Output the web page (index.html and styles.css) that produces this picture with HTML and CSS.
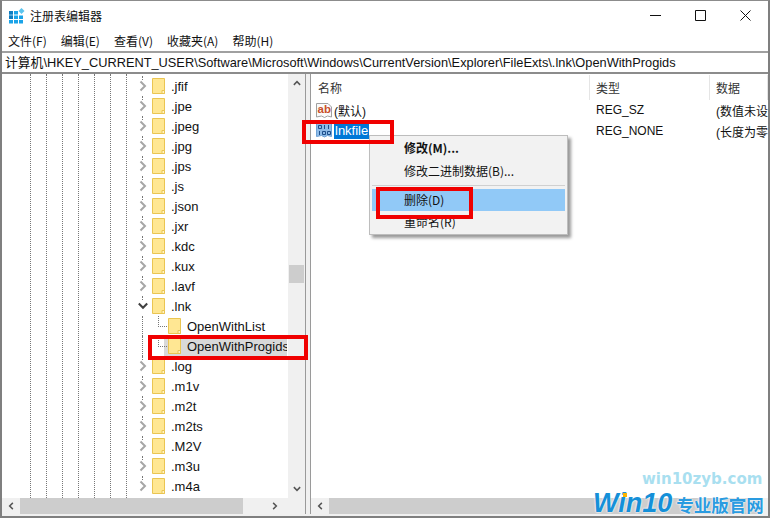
FILE: index.html
```html
<!DOCTYPE html>
<html>
<head>
  <title>注册表编辑器</title>
  <link rel="stylesheet" href="styles.css">
</head>
<body>
  <svg class="defs" width="0" height="0">
    <symbol id="folder" viewBox="0 0 13 16">
      <path d="M.5.5h12v15H.5z" fill="#ffe793" stroke="#eac552"/>
      <path d="M10 15.5v-3h2.500v3z" fill="#fff3c4" stroke="#eac552"/>
    </symbol>
    <symbol id="closed" viewBox="0 0 8 12">
      <path d="M1.500 1.500 6 6l-4.500 4.500" fill="none" stroke="#a6a6a6" stroke-width="2"/>
    </symbol>
    <symbol id="open" viewBox="0 0 10 8">
      <path d="M.8 1.500 5 5.800l4.200-4.300" fill="none" stroke="#404040" stroke-width="2"/>
    </symbol>
  </svg>

  <div class="window">
    <div class="titlebar">
      <svg class="app-icon" width="16" height="16" viewBox="0 0 16 16">
        <path d="M0 3h4v3.500H0zM5 3h4v3.500H5zM0 7.500h4V11H0zM5 7.500h4V11H5zM10 7.500h4V11h-4zM0 12h4v3.500H0zM5 12h4v3.500H5zM10 12h4v3.500h-4z" fill="#1aa3e8"/>
        <path d="M0 3h4v3.500H0zM0 7.500h4V11H0z" fill="#0f7cc0"/>
        <path d="M12.500 0 15.500 3l-3 3-3-3z" fill="#5cc4ee"/>
      </svg>
      <span class="title">注册表编辑器</span>
      <div class="controls">
        <svg width="11" height="11" viewBox="0 0 11 11"><path d="M0 5.500h11" stroke="#111"/></svg>
        <svg width="11" height="11" viewBox="0 0 11 11"><path d="M.5.5h10v10H.5z" fill="none" stroke="#111"/></svg>
        <svg width="11" height="11" viewBox="0 0 11 11"><path d="M.5.5l10 10M10.500.5l-10 10" stroke="#111"/></svg>
      </div>
    </div>

    <div class="menubar">
      <span>文件(F)</span>
      <span>编辑(E)</span>
      <span>查看(V)</span>
      <span>收藏夹(A)</span>
      <span>帮助(H)</span>
    </div>

    <div class="address">计算机\HKEY_CURRENT_USER\Software\Microsoft\Windows\CurrentVersion\Explorer\FileExts\.lnk\OpenWithProgids</div>

    <div class="panes">
      <div class="tree-pane">
        <div class="tree-top">
          <div class="tree">
            <div class="guides"><i></i><i></i><i></i><i></i><i></i><i></i><i></i></div>
            <div class="row"><svg class="arrow"><use href="#closed"/></svg><svg class="folder"><use href="#folder"/></svg><span>.jfif</span></div>
            <div class="row"><svg class="arrow"><use href="#closed"/></svg><svg class="folder"><use href="#folder"/></svg><span>.jpe</span></div>
            <div class="row"><svg class="arrow"><use href="#closed"/></svg><svg class="folder"><use href="#folder"/></svg><span>.jpeg</span></div>
            <div class="row"><svg class="arrow"><use href="#closed"/></svg><svg class="folder"><use href="#folder"/></svg><span>.jpg</span></div>
            <div class="row"><svg class="arrow"><use href="#closed"/></svg><svg class="folder"><use href="#folder"/></svg><span>.jps</span></div>
            <div class="row"><svg class="arrow"><use href="#closed"/></svg><svg class="folder"><use href="#folder"/></svg><span>.js</span></div>
            <div class="row"><svg class="arrow"><use href="#closed"/></svg><svg class="folder"><use href="#folder"/></svg><span>.json</span></div>
            <div class="row"><svg class="arrow"><use href="#closed"/></svg><svg class="folder"><use href="#folder"/></svg><span>.jxr</span></div>
            <div class="row"><svg class="arrow"><use href="#closed"/></svg><svg class="folder"><use href="#folder"/></svg><span>.kdc</span></div>
            <div class="row"><svg class="arrow"><use href="#closed"/></svg><svg class="folder"><use href="#folder"/></svg><span>.kux</span></div>
            <div class="row"><svg class="arrow"><use href="#closed"/></svg><svg class="folder"><use href="#folder"/></svg><span>.lavf</span></div>
            <div class="row"><svg class="arrow-open"><use href="#open"/></svg><svg class="folder"><use href="#folder"/></svg><span>.lnk</span></div>
            <div class="row child"><div class="label"><svg class="folder"><use href="#folder"/></svg><span>OpenWithList</span></div></div>
            <div class="row child current"><div class="label"><svg class="folder"><use href="#folder"/></svg><span>OpenWithProgids</span></div></div>
            <div class="row"><svg class="arrow"><use href="#closed"/></svg><svg class="folder"><use href="#folder"/></svg><span>.log</span></div>
            <div class="row"><svg class="arrow"><use href="#closed"/></svg><svg class="folder"><use href="#folder"/></svg><span>.m1v</span></div>
            <div class="row"><svg class="arrow"><use href="#closed"/></svg><svg class="folder"><use href="#folder"/></svg><span>.m2t</span></div>
            <div class="row"><svg class="arrow"><use href="#closed"/></svg><svg class="folder"><use href="#folder"/></svg><span>.m2ts</span></div>
            <div class="row"><svg class="arrow"><use href="#closed"/></svg><svg class="folder"><use href="#folder"/></svg><span>.M2V</span></div>
            <div class="row"><svg class="arrow"><use href="#closed"/></svg><svg class="folder"><use href="#folder"/></svg><span>.m3u</span></div>
            <div class="row"><svg class="arrow"><use href="#closed"/></svg><svg class="folder"><use href="#folder"/></svg><span>.m4a</span></div>
          </div>
          <div class="vscroll">
            <svg width="8" height="6" viewBox="0 0 10 8"><path d="M.8 6.500 5 2.200l4.200 4.300" fill="none" stroke="#555" stroke-width="2"/></svg>
            <div class="vthumb"></div>
            <svg width="8" height="6" viewBox="0 0 10 8"><path d="M.8 1.500 5 5.800l4.200-4.300" fill="none" stroke="#555" stroke-width="2"/></svg>
          </div>
        </div>
        <div class="hscroll">
          <svg width="6" height="8" viewBox="0 0 8 10"><path d="M6.500.8 2.200 5l4.300 4.200" fill="none" stroke="#555" stroke-width="2"/></svg>
          <div class="hthumb"></div>
          <svg width="6" height="8" viewBox="0 0 8 10"><path d="M1.500.8 5.800 5 1.500 9.200" fill="none" stroke="#555" stroke-width="2"/></svg>
        </div>
      </div>

      <div class="list-pane">
        <div class="list-body">
          <div class="list-head">
            <div class="col-name">名称</div>
            <div class="col-type">类型</div>
            <div class="col-data">数据</div>
          </div>
          <div class="list-row">
            <div class="col-name">
              <svg class="val-icon" width="16" height="17" viewBox="0 0 16 17">
                <path d="M.5 1.500h11.500l3.500 3.500v10l-4-1-3 1.500-3-1.500-5 1z" fill="#fafafa" stroke="#a0a0a0"/>
                <text x="1.500" y="11" class="ab">ab</text>
              </svg>
              <span>(默认)</span>
            </div>
            <div class="col-type">REG_SZ</div>
            <div class="col-data">(数值未设置)</div>
          </div>
          <div class="list-row">
            <div class="col-name">
              <svg class="val-icon" width="16" height="16" viewBox="0 0 16 16">
                <path d="M.5.500h15v13l-4-1-3 1.500-3-1.500-5 1z" fill="#8dbbe8" stroke="#6ea2d6"/>
                <path d="M2.500 2.500h3v3h-3zM8.500 2v4M12.500 2v4M3.500 8v4M6.500 8.500h3v3h-3zM11.500 8.500h3v3h-3z" fill="none" stroke="#1d4f8c"/>
              </svg>
              <span class="picked">lnkfile</span>
            </div>
            <div class="col-type">REG_NONE</div>
            <div class="col-data">(长度为零的二进制值)</div>
          </div>
        </div>
        <div class="hscroll list-scroll">
          <svg width="6" height="8" viewBox="0 0 8 10"><path d="M6.500.8 2.200 5l4.300 4.200" fill="none" stroke="#555" stroke-width="2"/></svg>
          <div class="hthumb"></div>
        </div>
      </div>
    </div>

    <div class="context-menu">
      <div class="item strong">修改(M)...</div>
      <div class="item">修改二进制数据(B)...</div>
      <div class="sep"></div>
      <div class="item hot">删除(D)</div>
      <div class="item">重命名(R)</div>
    </div>

    <div class="mark mark-value"></div>
    <div class="mark mark-delete"></div>
    <div class="mark mark-key"></div>

    <div class="site">win10zyb.com</div>
    <div class="brand"><b>Win10</b><span>专业版官网</span><i></i></div>
  </div>
</body>
</html>
```

FILE: styles.css
```css
* {
  box-sizing: border-box;
}

body {
  margin: 0;
  background-color: #fff;
  font-family: "Noto Sans CJK SC", "Liberation Sans", sans-serif;
  font-size: 12px;
  color: #111;
}

.defs {
  position: absolute;
}

.window {
  position: relative;
  width: 770px;
  height: 518px;
  overflow: hidden;
  display: flex;
  flex-direction: column;
  background-color: #fff;
  border-top: 1px solid #8c8c8c;
  border-left: 2px solid #7f7f7f;
  border-right: 2px solid #7f7f7f;
  border-bottom: 2px solid #7f7f7f;
}

.titlebar {
  height: 30px;
  display: flex;
  align-items: center;
  padding-left: 7px;
  flex: none;
}

.app-icon {
  margin-right: 5px;
}

.title {
  font-size: 12px;
  margin-top: -1px;
}

.controls {
  margin-left: auto;
  display: flex;
  gap: 34px;
  padding-right: 17px;
  margin-top: -1px;
}

.menubar {
  height: 20px;
  flex: none;
  display: flex;
  align-items: center;
  gap: 14px;
  padding-left: 6px;
  padding-bottom: 2px;
  font-size: 12px;
}

.address {
  height: 23px;
  flex: none;
  margin-left: -2px;
  margin-right: -2px;
  padding-left: 5px;
  border-top: 2px solid #a0a0a0;
  border-bottom: 2px solid #8c8c8c;
  font-family: "Liberation Sans", "Noto Sans CJK SC", sans-serif;
  font-size: 12.8px;
  line-height: 19px;
  white-space: nowrap;
}

.panes {
  flex: 1;
  min-height: 0;
  display: flex;
  gap: 4px;
  padding-bottom: 2px;
  background-color: #f0f0f0;
}

.tree-pane {
  width: 304px;
  flex: none;
  display: flex;
  flex-direction: column;
  border-right: 1px solid #9a9a9a;
  background-color: #fff;
}

.tree-top {
  flex: 1;
  min-height: 0;
  display: flex;
}

.tree {
  position: relative;
  flex: 1;
  min-width: 0;
  padding-top: 2px;
  overflow: hidden;
}

.guides {
  position: absolute;
  left: 28px;
  top: 0;
  bottom: 0;
  display: flex;
  gap: 15px;
}

.guides i {
  width: 1px;
  border-left: 1px dotted #777;
}

.row {
  position: relative;
  height: 20px;
  display: flex;
  align-items: center;
  padding-left: 137px;
  font-family: "Liberation Sans", sans-serif;
  font-size: 13px;
  white-space: nowrap;
}

.row::before {
  content: "";
  position: absolute;
  left: 140px;
  top: 0;
  height: 4px;
  border-left: 1px dotted #777;
}

.row.child::before {
  height: 20px;
}

.arrow {
  width: 8px;
  height: 12px;
  margin-right: 5px;
  flex: none;
}

.arrow-open {
  width: 10px;
  height: 8px;
  margin-left: -1px;
  margin-right: 4px;
  flex: none;
}

.folder {
  width: 13px;
  height: 16px;
  margin-right: 6px;
  flex: none;
}

.row.child {
  padding-left: 162px;
}

.row.child::after {
  content: "";
  position: absolute;
  left: 156px;
  top: 0;
  width: 8px;
  height: 10px;
  border-left: 1px dotted #777;
  border-bottom: 1px dotted #777;
}

.label {
  width: 123px;
  height: 19px;
  padding-left: 4px;
  display: flex;
  align-items: center;
  overflow: hidden;
}

.row.current .label {
  background-color: #d9d9d9;
}

.vscroll {
  width: 17px;
  flex: none;
  background-color: #f0f0f0;
  display: flex;
  flex-direction: column;
  align-items: center;
  padding: 6px 0;
}

.vthumb {
  width: 15px;
  height: 18px;
  background-color: #cdcdcd;
  margin-top: 179px;
  margin-bottom: auto;
}

.hscroll {
  height: 16px;
  flex: none;
  background-color: #f0f0f0;
  display: flex;
  align-items: center;
  padding: 0 27px 0 6px;
}

.hthumb {
  width: 223px;
  height: 100%;
  background-color: #cdcdcd;
  margin-left: 6px;
  margin-right: auto;
}

.list-pane {
  flex: 1;
  min-width: 0;
  display: flex;
  flex-direction: column;
  background-color: #fff;
  border-left: 1px solid #9a9a9a;
  font-family: "Liberation Sans", "Noto Sans CJK SC", sans-serif;
  overflow: hidden;
}

.list-body {
  flex: 1;
  min-height: 0;
  overflow: hidden;
}

.list-scroll {
  padding: 0 8px 0 6px;
}

.list-scroll .hthumb {
  flex: 1;
  margin-left: 6px;
  margin-right: 0;
}

.list-head {
  height: 24.5px;
  margin-top: 1px;
  display: flex;
  align-items: center;
  color: #333;
}

.list-head > div {
  height: 100%;
  display: flex;
  align-items: center;
  border-right: 1px solid #e5e5e5;
}

.list-row {
  height: 21px;
  display: flex;
  align-items: center;
}

.col-name {
  width: 279px;
  flex: none;
  padding-left: 7px;
  display: flex;
  align-items: center;
}

.col-type {
  width: 120px;
  flex: none;
  padding-left: 6px;
  font-size: 12px;
}

.col-data {
  flex: 1;
  padding-left: 6px;
  white-space: nowrap;
}

.list-row .col-name {
  padding-left: 5px;
  font-size: 12px;
}

.val-icon {
  flex: none;
  margin-right: 2px;
}

.ab {
  font-family: "Liberation Sans", sans-serif;
  font-size: 11.5px;
  font-weight: bold;
  fill: #c8502a;
}

.picked {
  background-color: #0078d7;
  color: #fff;
  padding: 0 1px;
  height: 16px;
  line-height: 16px;
  font-size: 13px;
}

.context-menu {
  position: absolute;
  left: 367px;
  top: 134px;
  width: 199px;
  height: 100px;
  padding: 0 2px;
  background-color: #f2f2f2;
  border: 1px solid #bdbdbd;
  box-shadow: 3px 3px 3px rgba(0, 0, 0, 0.4);
  font-family: "Noto Sans CJK SC", "Liberation Sans", sans-serif;
  font-size: 12px;
}

.item {
  height: 22px;
  line-height: 22px;
  padding-left: 32px;
  white-space: nowrap;
}

.item.strong {
  font-weight: bold;
  height: 24px;
  line-height: 24px;
}

.sep {
  height: 1px;
  margin: 3px 0;
  background-color: #d0d0d0;
}

.item.hot {
  background-color: #91c9f7;
}

.mark {
  position: absolute;
  border: 4px solid #f00000;
}

.mark-value {
  left: 300px;
  top: 119px;
  width: 92px;
  height: 24px;
}

.mark-delete {
  left: 374px;
  top: 186px;
  width: 97px;
  height: 32px;
}

.mark-key {
  left: 146px;
  top: 334px;
  width: 160px;
  height: 25px;
}

.site {
  position: absolute;
  left: 640px;
  top: 469px;
  font-family: "DejaVu Sans", sans-serif;
  font-weight: bold;
  font-size: 15px;
  color: #a9dff0;
  white-space: nowrap;
}

.brand {
  position: absolute;
  left: 591px;
  top: 489px;
  width: 177px;
  display: flex;
  align-items: center;
  gap: 4px;
  white-space: nowrap;
  color: #1590d8;
  text-shadow: 0 0 2px #fff, 0 0 2px #fff;
}

.brand b {
  font-family: "Liberation Sans", sans-serif;
  font-size: 27px;
  font-style: italic;
  line-height: 26px;
}

.brand span {
  font-weight: bold;
  font-size: 17.5px;
  line-height: 22px;
  margin-top: 3px;
  color: #2a9be0;
}

.brand i {
  position: absolute;
  left: 30px;
  top: 3px;
  width: 4px;
  height: 4px;
  background-color: #ffb400;
}
```
